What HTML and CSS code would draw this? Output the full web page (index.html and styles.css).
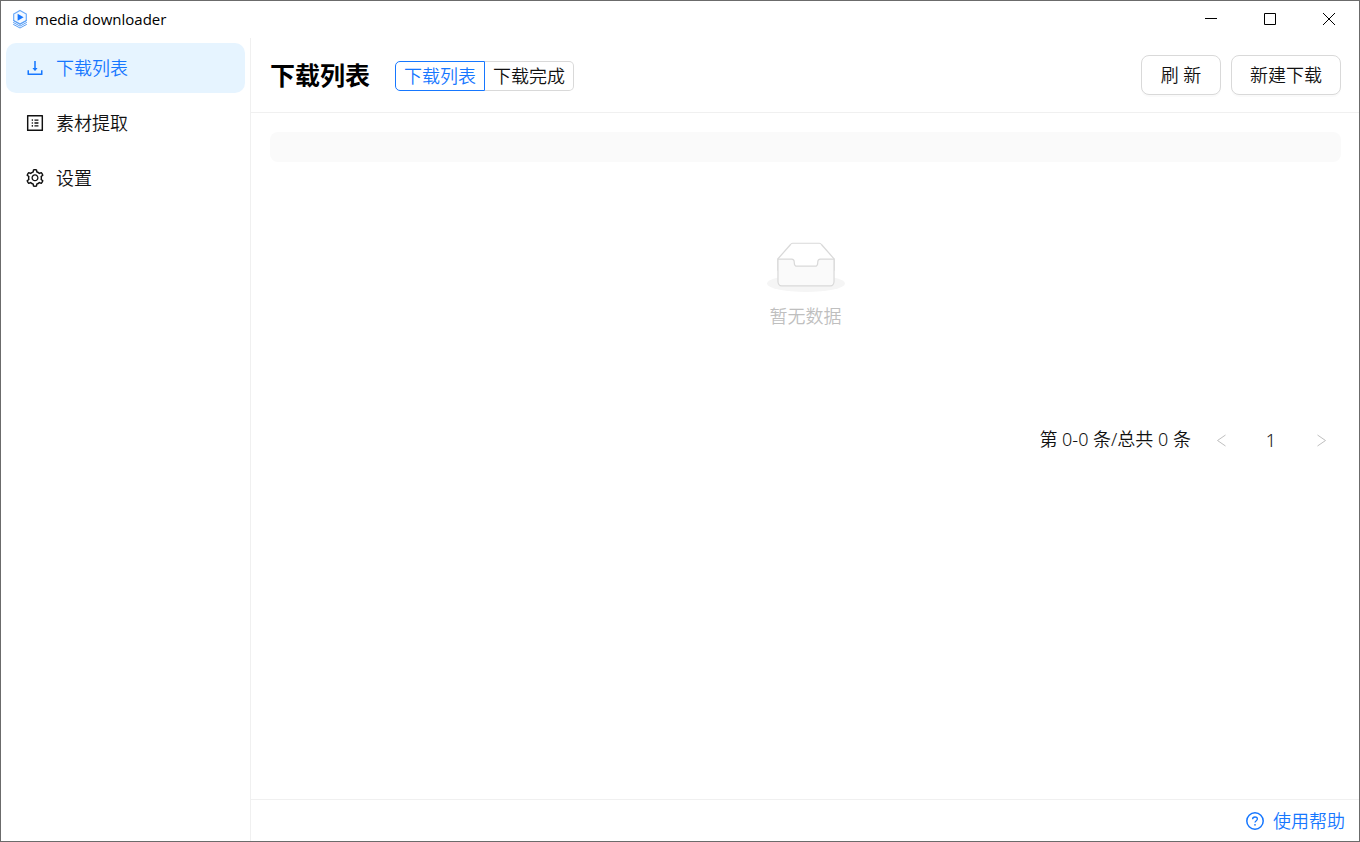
FILE: index.html
```html
<!DOCTYPE html>
<html lang="zh-CN">
<head>
<meta charset="utf-8">
<title>media downloader</title>
<link rel="stylesheet" href="styles.css">
</head>
<body>
<div class="window">
  <header class="titlebar">
    <svg class="logo" viewBox="0 0 16 20" aria-hidden="true">
      <path d="M8 1.500 14.300 5v6.500L8 15 1.700 11.500V5z" fill="#f4f9ff" stroke="#6aaafa" stroke-width="1.200"/>
      <path d="M5.600 4.800v7L11.600 8.300z" fill="#1677ff"/>
      <path d="M1.200 11.500 8 15.200l6.800-3.700M1.200 13.400 8 17.100l6.800-3.700M1.200 15.300 8 19l6.800-3.700" fill="none" stroke="#5a9ff5" stroke-width="1"/>
    </svg>
    <span class="app-name">media downloader</span>
    <div class="window-controls">
      <button class="window-button" type="button" aria-label="最小化"><svg viewBox="0 0 12 12"><path d="M0 5.500h12"/></svg></button>
      <button class="window-button" type="button" aria-label="最大化"><svg viewBox="0 0 12 12"><path d="M.5.5h11v11H.5z"/></svg></button>
      <button class="window-button" type="button" aria-label="关闭"><svg viewBox="0 0 12 12"><path d="M0 0l12 12M12 0L0 12"/></svg></button>
    </div>
  </header>
  <div class="layout">
    <nav class="sidebar">
      <a class="menu-item active" href="#downloads">
        <svg class="icon" viewBox="64 64 896 896"><path d="M505.700 661a8 8 0 0012.600 0l112-141.700c4.100-5.200.4-12.900-6.300-12.900h-74.100V168c0-4.400-3.600-8-8-8h-60c-4.400 0-8 3.600-8 8v338.300H400c-6.700 0-10.400 7.700-6.300 12.900l112 141.800zM878 626h-60c-4.400 0-8 3.600-8 8v154H214V634c0-4.400-3.600-8-8-8h-60c-4.400 0-8 3.600-8 8v198c0 17.700 14.300 32 32 32h684c17.700 0 32-14.300 32-32V634c0-4.400-3.600-8-8-8z"/></svg>
        <span>下载列表</span>
      </a>
      <a class="menu-item" href="#extract">
        <svg class="icon" viewBox="64 64 896 896"><path d="M880 112H144c-17.700 0-32 14.300-32 32v736c0 17.700 14.300 32 32 32h736c17.700 0 32-14.300 32-32V144c0-17.700-14.300-32-32-32zm-40 728H184V184h656v656zM492 400h184c4.400 0 8-3.600 8-8v-48c0-4.400-3.600-8-8-8H492c-4.400 0-8 3.600-8 8v48c0 4.400 3.600 8 8 8zm0 144h184c4.400 0 8-3.600 8-8v-48c0-4.400-3.600-8-8-8H492c-4.400 0-8 3.600-8 8v48c0 4.400 3.600 8 8 8zm0 144h184c4.400 0 8-3.600 8-8v-48c0-4.400-3.600-8-8-8H492c-4.400 0-8 3.600-8 8v48c0 4.400 3.600 8 8 8zM340 368a40 40 0 1080 0 40 40 0 10-80 0zm0 144a40 40 0 1080 0 40 40 0 10-80 0zm0 144a40 40 0 1080 0 40 40 0 10-80 0z"/></svg>
        <span>素材提取</span>
      </a>
      <a class="menu-item" href="#settings">
        <svg class="icon" viewBox="64 64 896 896"><path d="M924.800 625.700l-65.500-56c3.100-19 4.700-38.400 4.700-57.800s-1.600-38.800-4.700-57.800l65.500-56a32.030 32.030 0 009.300-35.200l-.9-2.600a443.740 443.740 0 00-79.700-137.900l-1.800-2.100a32.120 32.120 0 00-35.100-9.500l-81.300 28.900c-30-24.600-63.500-44-99.700-57.600l-15.700-85a32.050 32.050 0 00-25.800-25.700l-2.700-.5c-52.100-9.400-106.900-9.400-159 0l-2.700.5a32.050 32.050 0 00-25.800 25.700l-15.800 85.400a351.860 351.860 0 00-99 57.400l-81.900-29.100a32 32 0 00-35.100 9.500l-1.800 2.100a446.020 446.020 0 00-79.700 137.900l-.9 2.600c-4.500 12.500-.8 26.500 9.300 35.200l66.300 56.600c-3.100 18.800-4.600 38-4.600 57.100 0 19.200 1.500 38.400 4.600 57.100L99 625.500a32.030 32.030 0 00-9.300 35.200l.9 2.600c18.100 50.400 44.900 96.900 79.700 137.900l1.800 2.100a32.120 32.120 0 0035.100 9.500l81.900-29.100c29.800 24.500 63.100 43.900 99 57.400l15.800 85.400a32.050 32.050 0 0025.800 25.700l2.700.5a449.400 449.400 0 00159 0l2.700-.5a32.050 32.050 0 0025.800-25.700l15.700-85a350 350 0 0099.700-57.600l81.300 28.900a32 32 0 0035.100-9.500l1.800-2.100c34.800-41.100 61.600-87.500 79.700-137.900l.9-2.600c4.500-12.300.8-26.300-9.300-35zM788.300 465.900c2.500 15.100 3.800 30.600 3.800 46.100s-1.300 31-3.800 46.100l-6.600 40.100 74.700 63.900a370.030 370.030 0 01-42.600 73.600L721 702.800l-31.400 25.800c-23.900 19.600-50.500 35-79.300 45.800l-38.100 14.300-17.900 97a377.500 377.500 0 01-85 0l-17.900-97.200-37.800-14.500c-28.500-10.800-55-26.200-78.700-45.700l-31.400-25.900-93.400 33.200c-17-22.900-31.200-47.600-42.600-73.600l75.500-64.500-6.500-40c-2.400-14.900-3.700-30.300-3.700-45.500 0-15.300 1.200-30.600 3.700-45.500l6.500-40-75.500-64.500c11.300-26.100 25.600-50.700 42.600-73.600l93.400 33.200 31.400-25.900c23.700-19.500 50.200-34.900 78.700-45.700l37.900-14.300 17.900-97.200c28.100-3.200 56.800-3.200 85 0l17.900 97 38.100 14.300c28.700 10.800 55.400 26.200 79.300 45.800l31.400 25.800 92.800-32.900c17 22.900 31.200 47.600 42.600 73.600L781.800 426l6.500 39.900zM512 326c-97.200 0-176 78.800-176 176s78.800 176 176 176 176-78.800 176-176-78.800-176-176-176zm79.200 255.200A111.600 111.600 0 01512 614c-29.900 0-58-11.700-79.200-32.800A111.600 111.600 0 01400 502c0-29.900 11.700-58 32.800-79.200C454 401.600 482.100 390 512 390c29.900 0 58 11.600 79.200 32.800A111.600 111.600 0 01624 502c0 29.900-11.700 58-32.800 79.200z"/></svg>
        <span>设置</span>
      </a>
    </nav>
    <main class="main">
      <div class="page-header">
        <h1 class="page-title">下载列表</h1>
        <div class="segments">
          <label class="segment"><input type="radio" name="list" checked><span>下载列表</span></label>
          <label class="segment"><input type="radio" name="list"><span>下载完成</span></label>
        </div>
        <div class="actions">
          <button class="button" type="button">刷 新</button>
          <button class="button" type="button">新建下载</button>
        </div>
      </div>
      <section class="content">
        <div class="table-head"></div>
        <div class="empty">
          <svg class="empty-image" viewBox="0 0 64 41" aria-hidden="true">
            <g transform="translate(0 1)" fill="none" fill-rule="evenodd">
              <ellipse fill="#f5f5f5" cx="32" cy="33" rx="32" ry="7"/>
              <g stroke="#d9d9d9" fill-rule="nonzero">
                <path fill="#fff" d="M55 12.760L44.854 1.258C44.367.474 43.656 0 42.907 0H21.093c-.749 0-1.460.474-1.947 1.257L9 12.761V22h46v-9.240z"/>
                <path fill="#fafafa" d="M41.613 15.931c0-1.605.994-2.930 2.227-2.931H55v18.137C55 33.260 53.680 35 52.050 35h-40.100C10.320 35 9 33.259 9 31.137V13h11.160c1.233 0 2.227 1.323 2.227 2.928v.022c0 1.605 1.005 2.901 2.237 2.901h14.752c1.232 0 2.237-1.308 2.237-2.913v-.007z"/>
              </g>
            </g>
          </svg>
          <p class="empty-text">暂无数据</p>
        </div>
        <div class="pagination">
          <span class="total">第 0-0 条/总共 0 条</span>
          <button class="page-button" type="button" aria-label="上一页" disabled><svg viewBox="0 0 14 14"><path d="M11.500 2 3.500 7.500l8 5.500"/></svg></button>
          <button class="page-button" type="button">1</button>
          <button class="page-button" type="button" aria-label="下一页" disabled><svg viewBox="0 0 14 14"><path d="m3.500 2 8 5.500-8 5.500"/></svg></button>
        </div>
      </section>
      <footer class="footer">
        <a class="help" href="#help">
          <svg class="icon" viewBox="0 0 18 18"><circle cx="9" cy="9" r="8.200" fill="none" stroke="currentColor" stroke-width="1.500"/><path d="M6.600 7.200C6.600 5.800 7.600 5 9 5s2.400.9 2.400 2.100c0 1.600-2.400 1.700-2.400 3.500" fill="none" stroke="currentColor" stroke-width="1.300"/><circle cx="9" cy="12.800" r=".9"/></svg>
          <span>使用帮助</span>
        </a>
      </footer>
    </main>
  </div>
</div>
</body>
</html>
```
FILE: styles.css
```css
* { box-sizing: border-box; }

body {
  margin: 0;
  background: #fff;
  color: #111;
  font-family: "Noto Sans", "Noto Sans CJK SC", sans-serif;
  font-size: 18px;
  font-weight: 350;
  line-height: 28px;
}

button { font: inherit; color: inherit; background: none; border: 0; padding: 0; }
a { color: inherit; text-decoration: none; }
svg { display: block; flex: none; }

.window {
  display: flex;
  flex-direction: column;
  min-height: 100vh;
  border: 1px solid #6b6b6b;
}

.titlebar { display: flex; align-items: flex-start; height: 37px; padding: 0 1px 0 11px; }
.logo { width: 16px; height: 20px; margin-top: 8px; }
.app-name {
  margin-left: 7px;
  color: #000;
  font: 400 15px/36px "Open Sans", "Noto Sans", sans-serif;
}
.window-controls { display: flex; margin-left: auto; }
.window-button { display: grid; place-items: center; width: 59px; height: 36px; }
.window-button svg { width: 12px; height: 12px; fill: none; stroke: #000; stroke-width: 1; }

.layout { display: flex; flex: 1; }

.sidebar {
  display: flex;
  flex-direction: column;
  flex: none;
  gap: 5px;
  width: 250px;
  padding: 5px;
  border-right: 1px solid #f0f0f0;
}
.menu-item {
  display: flex;
  align-items: center;
  gap: 12px;
  height: 50px;
  padding: 0 20px;
  border-radius: 10px;
}
.menu-item.active { background: #e6f4ff; color: #1677ff; }
.icon { width: 18px; height: 18px; fill: currentColor; }

.main { display: flex; flex-direction: column; flex: 1; }
.page-header {
  display: flex;
  align-items: center;
  height: 75px;
  padding: 0 18px 0 19px;
  border-bottom: 1px solid #f0f0f0;
}
.page-title { margin: 0; color: #000; font-size: 25px; font-weight: 700; line-height: 38px; }

.segments { display: flex; margin: 2px 0 0 25px; }
.segment { display: block; cursor: pointer; }
.segment input { position: absolute; opacity: 0; pointer-events: none; }
.segment span {
  display: block;
  padding: 0 8px;
  border: 1px solid #d9d9d9;
  line-height: 28px;
}
.segment:first-child span { border-radius: 5px 0 0 5px; }
.segment:last-child span { border-left: 0; border-radius: 0 5px 5px 0; }
.segment input:checked + span { border-color: #1677ff; color: #1677ff; }

.actions { display: flex; gap: 10px; margin-left: auto; }
.button {
  min-width: 80px;
  height: 40px;
  padding: 0 18px;
  border: 1px solid #d9d9d9;
  border-radius: 8px;
  background: #fff;
  box-shadow: 0 2px 0 rgba(0, 0, 0, 0.02);
}

.content { flex: 1; padding: 19px 18px 19px 19px; }
.table-head { height: 30px; border-radius: 8px; background: #fafafa; }
.empty { display: flex; flex-direction: column; align-items: center; padding: 80px 0; }
.empty-image { width: 78px; height: 50px; }
.empty-text { margin: 10px 0 0; color: #bfbfbf; }

.pagination { display: flex; justify-content: flex-end; gap: 10px; margin-top: 10px; }
.total { line-height: 38px; }
.page-button { display: grid; place-items: center; width: 40px; height: 40px; }
.page-button svg { width: 14px; height: 14px; fill: none; stroke: #bfbfbf; stroke-width: 1; }

.footer {
  display: flex;
  align-items: center;
  justify-content: flex-end;
  height: 42px;
  padding: 0 14px;
  border-top: 1px solid #f0f0f0;
}
.help { display: flex; align-items: center; gap: 9px; color: #1677ff; }
```
